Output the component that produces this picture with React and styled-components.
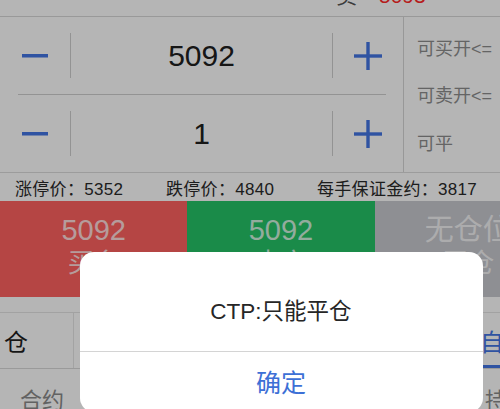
import React from 'react';
import styled, { createGlobalStyle } from 'styled-components';

const GlobalStyle = createGlobalStyle`
  html, body {
    margin: 0;
    padding: 0;
    overflow: hidden;
    background: #ffffff;
  }
  body {
    font-family: "Liberation Sans", "Noto Sans CJK SC", sans-serif;
    color: #1e1e1e;
  }
`;

const Screen = styled.div`
  position: relative;
  width: 562px;
  height: 409px;
  overflow: hidden;
  background: #ffffff;
`;

// quote strip scrolled mostly out of view: only the bottom of its text shows
const TopBar = styled.div`
  height: 16px;
  display: flex;
  align-items: flex-end;
  gap: 22px;
  padding-left: 336px;
  border-bottom: 1px solid #d8d8d8;
  overflow: hidden;
`;

const QuoteText = styled.span`
  font-size: 21px;
  line-height: 21px;
  margin-bottom: 10px;
  color: ${({ $color }) => $color || '#555'};
`;

const TradePanel = styled.div`
  display: flex;
  height: 155px;
  border-bottom: 1px solid #dcdcdc;
`;

const Steppers = styled.div`
  width: 403px;
  display: flex;
  flex-direction: column;
  border-right: 1px solid #d6d6d6;
`;

const StepRow = styled.div`
  flex: 1;
  display: flex;
  align-items: center;
`;

const StepButton = styled.div`
  width: 70px;
  height: 100%;
  display: flex;
  align-items: center;
  justify-content: center;
  color: #4375e4;
`;

const VLine = styled.div`
  width: 1px;
  height: 45px;
  background: #d0d0d0;
`;

const StepValue = styled.div`
  flex: 1;
  text-align: center;
  font-size: 30px;
  color: #202020;
`;

const RowDivider = styled.div`
  height: 1px;
  margin: 0 17px 0 18px;
  background: #cfcfcf;
`;

const Limits = styled.div`
  flex: 1;
  display: flex;
  flex-direction: column;
  justify-content: space-around;
  padding: 6px 0 6px 13px;
`;

const LimitLabel = styled.div`
  font-size: 18px;
  color: #8e8e8e;
  white-space: nowrap;
`;

const InfoRow = styled.div`
  height: 28px;
  display: grid;
  grid-template-columns: 151px 151px auto;
  align-items: center;
  padding-left: 15px;
  font-size: 17px;
  letter-spacing: 0.3px;
  color: #2a2a2a;
  white-space: nowrap;
`;

const OrderButtons = styled.div`
  display: grid;
  grid-template-columns: repeat(3, 1fr);
  height: 96px;
`;

const OrderButton = styled.div`
  background: ${({ $bg }) => $bg};
  color: rgba(255, 255, 255, 0.8);
  display: flex;
  flex-direction: column;
  align-items: center;
  padding-top: 12px;
`;

const OrderPrice = styled.div`
  font-size: 29px;
  line-height: 34px;
`;

const OrderAction = styled.div`
  font-size: 26px;
  line-height: 32px;
`;

const Spacer = styled.div`
  height: 15px;
  border-bottom: 1px solid #e4e4e4;
`;

const TabBar = styled.div`
  height: 55px;
  display: flex;
  align-items: stretch;
  border-bottom: 1px solid #dadada;
`;

const Tab = styled.div`
  width: ${({ $w }) => $w}px;
  display: flex;
  align-items: center;
  font-size: 24px;
  color: ${({ $active }) => ($active ? '#4375e4' : '#1e1e1e')};
  border-right: ${({ $sep }) => ($sep ? '1px solid #e6e6e6' : 'none')};
  box-shadow: ${({ $active }) => ($active ? 'inset 0 -3px 0 #4375e4' : 'none')};
  padding-left: ${({ $pad }) => $pad || 0}px;
  box-sizing: border-box;
  overflow: hidden;
  white-space: nowrap;
`;

const TableHead = styled.div`
  height: 40px;
  display: flex;
  align-items: flex-end;
  font-size: 22px;
  color: #8a8a8a;
`;

const HeadCell = styled.div`
  width: ${({ $w }) => $w}px;
  padding-left: ${({ $pad }) => $pad || 0}px;
  box-sizing: border-box;
  white-space: nowrap;
  line-height: 24px;
  margin-bottom: -4px;
`;

const Backdrop = styled.div`
  position: absolute;
  inset: 0;
  background: rgba(0, 0, 0, 0.29);
  display: flex;
  justify-content: center;
  align-items: flex-start;
  padding-top: 252px;
`;

const Dialog = styled.div`
  width: 403px;
  height: 160px;
  background: #ffffff;
  border-radius: 14px;
  display: flex;
  flex-direction: column;
  overflow: hidden;
`;

const DialogMessage = styled.div`
  height: 100px;
  box-sizing: border-box;
  display: flex;
  align-items: center;
  justify-content: center;
  padding-top: 14px;
  font-size: 22.5px;
  color: #262626;
  border-bottom: 1px solid #d4d4d4;
`;

const DialogAction = styled.div`
  height: 58px;
  display: flex;
  align-items: center;
  justify-content: center;
  font-size: 25px;
  color: #3d70d6;
`;

const Minus = () => (
  <svg width="26" height="4" viewBox="0 0 26 4">
    <rect x="0" y="0" width="26" height="3.5" fill="currentColor" />
  </svg>
);

const Plus = () => (
  <svg width="28" height="28" viewBox="0 0 28 28">
    <rect x="0" y="12.3" width="28" height="3.4" fill="currentColor" />
    <rect x="12.3" y="0" width="3.4" height="28" fill="currentColor" />
  </svg>
);

const Stepper = ({ value }) => (
  <StepRow>
    <StepButton><Minus /></StepButton>
    <VLine />
    <StepValue>{value}</StepValue>
    <VLine />
    <StepButton><Plus /></StepButton>
  </StepRow>
);

const App = () => {
  return (
    <Screen>
      <GlobalStyle />
      <TopBar>
        <QuoteText>卖</QuoteText>
        <QuoteText $color="#ff2a2a">5093</QuoteText>
      </TopBar>

      <TradePanel>
        <Steppers>
          <Stepper value="5092" />
          <RowDivider />
          <Stepper value="1" />
        </Steppers>
        <Limits>
          <LimitLabel>可买开&lt;=</LimitLabel>
          <LimitLabel>可卖开&lt;=</LimitLabel>
          <LimitLabel>可平</LimitLabel>
        </Limits>
      </TradePanel>

      <InfoRow>
        <span>涨停价：5352</span>
        <span>跌停价：4840</span>
        <span>每手保证金约：3817</span>
      </InfoRow>

      <OrderButtons>
        <OrderButton $bg="#ff6260">
          <OrderPrice>5092</OrderPrice>
          <OrderAction>买多</OrderAction>
        </OrderButton>
        <OrderButton $bg="#25c468">
          <OrderPrice>5092</OrderPrice>
          <OrderAction>卖空</OrderAction>
        </OrderButton>
        <OrderButton $bg="#c9cad0">
          <OrderPrice>无仓位</OrderPrice>
          <OrderAction>平仓</OrderAction>
        </OrderButton>
      </OrderButtons>

      <Spacer />

      <TabBar>
        <Tab $w={74} $sep $pad={4}>仓</Tab>
        <Tab $w={403} $sep />
        <Tab $w={85} $active $pad={3}>自选</Tab>
      </TabBar>

      <TableHead>
        <HeadCell $w={480} $pad={20}>合约</HeadCell>
        <HeadCell $w={82} $pad={5}>持仓</HeadCell>
      </TableHead>

      <Backdrop>
        <Dialog>
          <DialogMessage>CTP:只能平仓</DialogMessage>
          <DialogAction>确定</DialogAction>
        </Dialog>
      </Backdrop>
    </Screen>
  );
};

export default App;
